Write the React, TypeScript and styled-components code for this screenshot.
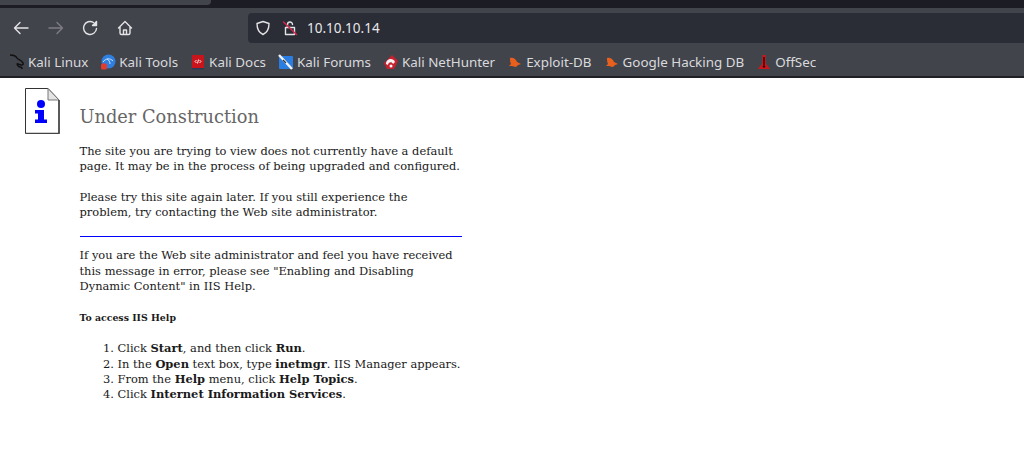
import React from 'react';
import styled, { createGlobalStyle } from 'styled-components';

const GlobalStyle = createGlobalStyle`
  html, body {
    margin: 0;
    padding: 0;
    background: #fff;
    overflow: hidden;
  }
`;

const Window = styled.div`
  width: 1024px;
  height: 470px;
  display: flex;
  flex-direction: column;
`;

const TabStrip = styled.div`
  height: 8px;
  background: #1c1d24;
  flex-shrink: 0;
`;

const TabEdge = styled.div`
  width: 211px;
  height: 5px;
  background: #42444c;
  border-radius: 0 0 4px 0;
`;

const NavBar = styled.div`
  height: 36px;
  box-sizing: border-box;
  padding: 4px 0 0 13px;
  background: #42444c;
  display: flex;
  align-items: center;
  flex-shrink: 0;
`;

const NavButtons = styled.div`
  display: flex;
  align-items: center;
  gap: 18.5px;
  width: 235px;
`;

const NavIcon = styled.svg<{ $dim?: boolean }>`
  width: 16px;
  height: 16px;
  fill: none;
  stroke: ${p => (p.$dim ? '#7d7e84' : '#e4e4e6')};
  stroke-width: 1.4;
  stroke-linecap: round;
  stroke-linejoin: round;
  flex-shrink: 0;
`;

const UrlBar = styled.div`
  flex: 1;
  height: 30px;
  background: #2a2c36;
  border-radius: 4px 0 0 4px;
  display: flex;
  align-items: center;
  padding-left: 7px;
  gap: 11px;
`;

const UrlText = styled.span`
  font-family: 'Noto Sans', sans-serif;
  font-size: 13.5px;
  color: #e8e8ea;
  margin-left: -2px;
`;

const BookmarkBar = styled.div`
  height: 34px;
  background: #42444c;
  border-bottom: 2px solid #1f2026;
  box-sizing: border-box;
  display: flex;
  align-items: center;
  padding: 3px 0 0 9px;
  gap: 12px;
  flex-shrink: 0;
`;

const Bookmark = styled.div`
  display: flex;
  align-items: center;
  gap: 3px;
  font-family: 'Noto Sans', sans-serif;
  font-size: 13.4px;
  color: #d9dadc;
  white-space: nowrap;
`;

const FavIcon = styled.svg`
  width: 16px;
  height: 16px;
  flex-shrink: 0;
`;

const Page = styled.main`
  flex: 1;
  background: #fff;
  display: flex;
  align-items: flex-start;
  padding: 10px 0 0 25px;
`;

const DocIcon = styled.svg`
  width: 35px;
  height: 46px;
  flex-shrink: 0;
  margin-right: 19.5px;
`;

const Content = styled.div`
  width: 384px;
  font-family: 'DejaVu Serif', serif;
  font-size: 11.45px;
  line-height: 15.3px;
  color: #1a1a1a;
`;

const Title = styled.h1`
  font-size: 17.8px;
  line-height: 22px;
  font-weight: 400;
  color: #666;
  margin: 18px 0 16px;
`;

const Para = styled.p`
  margin: 0 0 15.3px;
`;

const Rule = styled.hr`
  border: 0;
  border-top: 1px solid #0000ff;
  width: 382px;
  height: 0;
  margin: 16px 0 11px;
`;

const HelpHeading = styled.h2`
  font-size: 9.4px;
  line-height: 12px;
  font-weight: 700;
  margin: 18px 0 17px;
`;

const Steps = styled.ol`
  margin: 0;
  padding-left: 38px;
`;

const bugIcon = (
  <FavIcon viewBox="0 0 16 16">
    <path d="M3 4c3-1 6 1 7 4l4 2-3 1-2 2c-2 0-3-1-4-1l-3 0 2-2C3 8 3 6 3 4z" fill="#e8601c" />
  </FavIcon>
);

const bookmarks: { label: string; icon: React.ReactNode }[] = [
  {
    label: 'Kali Linux',
    icon: (
      <FavIcon viewBox="0 0 16 16">
        <path d="M1 1c3 0 6 1 7 3s5 2 6 5-3 2-5 1 0 3 2 3 2 2 2 2" fill="none" stroke="#111" strokeWidth="1.5" />
      </FavIcon>
    ),
  },
  {
    label: 'Kali Tools',
    icon: (
      <FavIcon viewBox="0 0 16 16">
        <circle cx="8.500" cy="7.500" r="7" fill="#2f7fe0" />
        <path d="M3 8c3-4 7-4 10-1M7 5c2 1 3 3 3 5" fill="none" stroke="#cfe4fb" strokeWidth="1" />
        <rect x="1" y="9.500" width="6" height="6" rx="1.500" fill="#e23b30" />
      </FavIcon>
    ),
  },
  {
    label: 'Kali Docs',
    icon: (
      <FavIcon viewBox="0 0 16 16">
        <rect x="2" y="1" width="12" height="14" fill="#c8141b" />
        <rect x="2" y="14" width="12" height="1.500" fill="#2c3a55" />
        <path d="M6.500 6 5 7.500 6.500 9M9.500 6 11 7.500 9.500 9M8.500 5.500l-1 4" fill="none" stroke="#fff" strokeWidth="0.9" />
      </FavIcon>
    ),
  },
  {
    label: 'Kali Forums',
    icon: (
      <FavIcon viewBox="0 0 16 16">
        <rect x="1" y="2" width="14" height="13" rx="1" fill="#2a7de1" />
        <path d="M1 1 14 15" stroke="#f2f2f2" strokeWidth="2.400" />
        <path d="M5 6 8 9" stroke="#333" strokeWidth="1.200" />
      </FavIcon>
    ),
  },
  {
    label: 'Kali NetHunter',
    icon: (
      <FavIcon viewBox="0 0 16 16">
        <path d="M1 9 9 1l6 6-4 8H4z" fill="#c7202f" />
        <path d="M3 10c0-5 7-7 9-2l-2 2c-1-3-5-2-5 1z" fill="#f4f4f4" />
        <circle cx="8" cy="12" r="1.500" fill="#f4f4f4" />
      </FavIcon>
    ),
  },
  { label: 'Exploit-DB', icon: bugIcon },
  { label: 'Google Hacking DB', icon: bugIcon },
  {
    label: 'OffSec',
    icon: (
      <FavIcon viewBox="0 0 16 16">
        <path d="M6.500 1h3l.5 9 4 5H2l4-5z" fill="#d0161b" />
        <path d="M8 3v8" stroke="#2a0a0a" strokeWidth="1.400" />
        <circle cx="8" cy="12.500" r="1.300" fill="#2a0a0a" />
      </FavIcon>
    ),
  },
];

export default function App() {
  return (
    <Window>
      <GlobalStyle />
      <TabStrip>
        <TabEdge />
      </TabStrip>
      <NavBar>
        <NavButtons>
          <NavIcon viewBox="0 0 16 16">
            <path d="M15 8H1.500M7 2.500 1.500 8 7 13.500" />
          </NavIcon>
          <NavIcon viewBox="0 0 16 16" $dim>
            <path d="M1 8h13.500M9 2.500 14.500 8 9 13.500" />
          </NavIcon>
          <NavIcon viewBox="0 0 16 16">
            <path d="M14.500 8.500A6.500 6.500 0 1 1 11.500 2.500" />
            <path d="M14.500 1.500v4h-4z" fill="#e4e4e6" />
          </NavIcon>
          <NavIcon viewBox="0 0 16 16">
            <path d="M1.500 8 8 1.500 14.500 8M3 6.500V13a1.500 1.500 0 0 0 1.500 1.500h7A1.500 1.500 0 0 0 13 13V6.500M6.500 14.500V10h3v4.500" />
          </NavIcon>
        </NavButtons>
        <UrlBar>
          <NavIcon viewBox="0 0 16 16">
            <path d="M8 1.500 14 3.500c0 5-1.500 9-6 11-4.500-2-6-6-6-11z" />
          </NavIcon>
          <NavIcon viewBox="0 0 16 16">
            <path d="M3.500 7.500h9v7h-9zM5.500 7.500V4.500a2.500 2.500 0 0 1 5 0" />
            <path d="M1.500 2 14.500 14.500" stroke="#d7264a" />
          </NavIcon>
          <UrlText>10.10.10.14</UrlText>
        </UrlBar>
      </NavBar>
      <BookmarkBar>
        {bookmarks.map(b => (
          <Bookmark key={b.label}>
            {b.icon}
            {b.label}
          </Bookmark>
        ))}
      </BookmarkBar>
      <Page>
        <DocIcon viewBox="0 0 35 46">
          <path d="M.5.5H23L34 12v33.500H.5z" fill="#fff" stroke="#333" />
          <path d="M23 .5V12h11z" fill="#e4e4e4" stroke="#777" />
          <path d="M34 12v33.500H1" fill="none" stroke="#444" strokeWidth="1.500" />
          <circle cx="16" cy="16" r="4" fill="#0000ff" />
          <path d="M10 22h9v9.500h3V35H10v-3.500h3V25.500h-3z" fill="#0000ff" />
        </DocIcon>
        <Content>
          <Title>Under Construction</Title>
          <Para>
            The site you are trying to view does not currently have a default
            <br />
            page. It may be in the process of being upgraded and configured.
          </Para>
          <Para>
            Please try this site again later. If you still experience the
            <br />
            problem, try contacting the Web site administrator.
          </Para>
          <Rule />
          <Para>
            If you are the Web site administrator and feel you have received
            <br />
            this message in error, please see "Enabling and Disabling
            <br />
            Dynamic Content" in IIS Help.
          </Para>
          <HelpHeading>To access IIS Help</HelpHeading>
          <Steps>
            <li>Click <b>Start</b>, and then click <b>Run</b>.</li>
            <li>In the <b>Open</b> text box, type <b>inetmgr</b>. IIS Manager appears.</li>
            <li>From the <b>Help</b> menu, click <b>Help Topics</b>.</li>
            <li>Click <b>Internet Information Services</b>.</li>
          </Steps>
        </Content>
      </Page>
    </Window>
  );
}
